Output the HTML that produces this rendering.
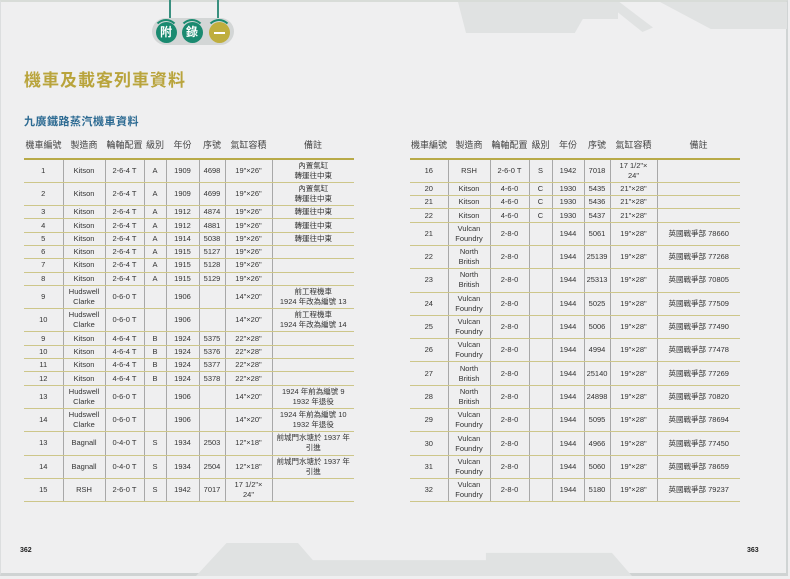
<!DOCTYPE html>
<html><head><meta charset="utf-8"><style>
*{margin:0;padding:0;box-sizing:border-box}
body{width:790px;height:579px;background:#efeff0;position:relative;overflow:hidden;font-family:"Liberation Sans","Noto Sans CJK TC",sans-serif;color:#333}
.frame{position:absolute;left:0;top:0;width:788px;height:576px;border-top:2px solid #d8dcd8;border-right:2px solid #d0d4d4;border-bottom:3px solid #cfd3d3;border-left:1px solid #dcdedf}
.sh{position:absolute;background:#e0e2e2}
table{position:absolute;border-collapse:collapse;table-layout:fixed;font-size:7.5px;line-height:10px}
td{text-align:center;vertical-align:middle;border-bottom:1px solid #cdc68a;border-left:1px solid #a8a8a8;padding:0;white-space:nowrap}
td:first-child{border-left:none}
tr.h td{border:none;border-bottom:2px solid #b8aa48;font-size:9px;color:#444;height:24px;vertical-align:middle;padding-bottom:3px}
tr.d td{height:23.3px}
tr.s td{height:13.3px}
.ring{position:absolute;width:26px;height:26px;border-radius:50%;border:2px solid transparent;border-top-color:#1a8a70}
.c{position:absolute;width:21px;height:21px;border-radius:50%;background:#1a8a70;color:#fff;font-size:12px;font-weight:bold;text-align:center;line-height:21px}
</style></head><body>
<div class="frame"></div>
<div class="sh" style="left:458px;top:2px;width:160px;height:31px;clip-path:polygon(0 0,100% 0,100% 55%,78% 55%,73% 100%,5% 100%,0 0)"></div>
<div class="sh" style="left:605px;top:2px;width:48px;height:30px;clip-path:polygon(0 0,30% 0,100% 85%,78% 100%)"></div>
<div class="sh" style="left:660px;top:2px;width:127px;height:27px;clip-path:polygon(0 0,100% 0,100% 100%,40% 100%)"></div>
<div class="sh" style="left:196px;top:543px;width:436px;height:33px;clip-path:polygon(7% 0,23.4% 0,26.8% 52%,66.5% 52%,66.5% 30%,95.4% 30%,100% 100%,0 100%)"></div>

<div style="position:absolute;left:169px;top:0;width:2px;height:19px;background:#3a9080"></div>
<div style="position:absolute;left:217px;top:0;width:2px;height:19px;background:#3a9080"></div>
<div style="position:absolute;left:152px;top:18px;width:82px;height:27px;border-radius:14px;background:#d3d6d6"></div>
<div class="ring" style="left:153px;top:19px"></div>
<div class="ring" style="left:179px;top:19px"></div>
<div class="ring" style="left:206px;top:19px"></div>
<div class="c" style="left:155.5px;top:22px">附</div>
<div class="c" style="left:181.5px;top:22px">錄</div>
<div class="c" style="left:208.5px;top:22px;background:#bfae3e"><div style="position:absolute;left:5px;top:9.5px;width:11px;height:2.5px;background:#fff"></div></div>

<div style="position:absolute;left:24px;top:66px;font-size:17px;font-weight:bold;color:#b9a43c;letter-spacing:1px">機車及載客列車資料</div>
<div style="position:absolute;left:24px;top:113px;font-size:11px;font-weight:bold;color:#2c6a92;letter-spacing:.5px">九廣鐵路蒸汽機車資料</div>

<table style="left:24px;top:135px;width:330px">
<colgroup><col style="width:39px"><col style="width:42px"><col style="width:39px"><col style="width:22px"><col style="width:33px"><col style="width:26px"><col style="width:47px"><col style="width:82px"></colgroup>
<tr class="h"><td>機車編號</td><td>製造商</td><td>輪軸配置</td><td>級別</td><td>年份</td><td>序號</td><td>氣缸容積</td><td>備註</td></tr>
<tr class="d"><td>1</td><td>Kitson</td><td>2-6-4 T</td><td>A</td><td>1909</td><td>4698</td><td>19"×26"</td><td>內置氣缸<br>轉運往中東</td></tr>
<tr class="d"><td>2</td><td>Kitson</td><td>2-6-4 T</td><td>A</td><td>1909</td><td>4699</td><td>19"×26"</td><td>內置氣缸<br>轉運往中東</td></tr>
<tr class="s"><td>3</td><td>Kitson</td><td>2-6-4 T</td><td>A</td><td>1912</td><td>4874</td><td>19"×26"</td><td>轉運往中東</td></tr>
<tr class="s"><td>4</td><td>Kitson</td><td>2-6-4 T</td><td>A</td><td>1912</td><td>4881</td><td>19"×26"</td><td>轉運往中東</td></tr>
<tr class="s"><td>5</td><td>Kitson</td><td>2-6-4 T</td><td>A</td><td>1914</td><td>5038</td><td>19"×26"</td><td>轉運往中東</td></tr>
<tr class="s"><td>6</td><td>Kitson</td><td>2-6-4 T</td><td>A</td><td>1915</td><td>5127</td><td>19"×26"</td><td></td></tr>
<tr class="s"><td>7</td><td>Kitson</td><td>2-6-4 T</td><td>A</td><td>1915</td><td>5128</td><td>19"×26"</td><td></td></tr>
<tr class="s"><td>8</td><td>Kitson</td><td>2-6-4 T</td><td>A</td><td>1915</td><td>5129</td><td>19"×26"</td><td></td></tr>
<tr class="d"><td>9</td><td>Hudswell<br>Clarke</td><td>0-6-0 T</td><td></td><td>1906</td><td></td><td>14"×20"</td><td>前工程機車<br>1924 年改為編號 13</td></tr>
<tr class="d"><td>10</td><td>Hudswell<br>Clarke</td><td>0-6-0 T</td><td></td><td>1906</td><td></td><td>14"×20"</td><td>前工程機車<br>1924 年改為編號 14</td></tr>
<tr class="s"><td>9</td><td>Kitson</td><td>4-6-4 T</td><td>B</td><td>1924</td><td>5375</td><td>22"×28"</td><td></td></tr>
<tr class="s"><td>10</td><td>Kitson</td><td>4-6-4 T</td><td>B</td><td>1924</td><td>5376</td><td>22"×28"</td><td></td></tr>
<tr class="s"><td>11</td><td>Kitson</td><td>4-6-4 T</td><td>B</td><td>1924</td><td>5377</td><td>22"×28"</td><td></td></tr>
<tr class="s"><td>12</td><td>Kitson</td><td>4-6-4 T</td><td>B</td><td>1924</td><td>5378</td><td>22"×28"</td><td></td></tr>
<tr class="d"><td>13</td><td>Hudswell<br>Clarke</td><td>0-6-0 T</td><td></td><td>1906</td><td></td><td>14"×20"</td><td>1924 年前為編號 9<br>1932 年退役</td></tr>
<tr class="d"><td>14</td><td>Hudswell<br>Clarke</td><td>0-6-0 T</td><td></td><td>1906</td><td></td><td>14"×20"</td><td>1924 年前為編號 10<br>1932 年退役</td></tr>
<tr class="d"><td>13</td><td>Bagnall</td><td>0-4-0 T</td><td>S</td><td>1934</td><td>2503</td><td>12"×18"</td><td>前城門水塘於 1937 年<br>引進</td></tr>
<tr class="d"><td>14</td><td>Bagnall</td><td>0-4-0 T</td><td>S</td><td>1934</td><td>2504</td><td>12"×18"</td><td>前城門水塘於 1937 年<br>引進</td></tr>
<tr class="d"><td>15</td><td>RSH</td><td>2-6-0 T</td><td>S</td><td>1942</td><td>7017</td><td>17 1/2"×<br>24"</td><td></td></tr>
</table>

<table style="left:410px;top:135px;width:330px">
<colgroup><col style="width:38px"><col style="width:42px"><col style="width:39px"><col style="width:23px"><col style="width:32px"><col style="width:26px"><col style="width:47px"><col style="width:83px"></colgroup>
<tr class="h"><td>機車編號</td><td>製造商</td><td>輪軸配置</td><td>級別</td><td>年份</td><td>序號</td><td>氣缸容積</td><td>備註</td></tr>
<tr class="d"><td>16</td><td>RSH</td><td>2-6-0 T</td><td>S</td><td>1942</td><td>7018</td><td>17 1/2"×<br>24"</td><td></td></tr>
<tr class="s"><td>20</td><td>Kitson</td><td>4-6-0</td><td>C</td><td>1930</td><td>5435</td><td>21"×28"</td><td></td></tr>
<tr class="s"><td>21</td><td>Kitson</td><td>4-6-0</td><td>C</td><td>1930</td><td>5436</td><td>21"×28"</td><td></td></tr>
<tr class="s"><td>22</td><td>Kitson</td><td>4-6-0</td><td>C</td><td>1930</td><td>5437</td><td>21"×28"</td><td></td></tr>
<tr class="d"><td>21</td><td>Vulcan<br>Foundry</td><td>2-8-0</td><td></td><td>1944</td><td>5061</td><td>19"×28"</td><td>英國戰爭部 78660</td></tr>
<tr class="d"><td>22</td><td>North<br>British</td><td>2-8-0</td><td></td><td>1944</td><td>25139</td><td>19"×28"</td><td>英國戰爭部 77268</td></tr>
<tr class="d"><td>23</td><td>North<br>British</td><td>2-8-0</td><td></td><td>1944</td><td>25313</td><td>19"×28"</td><td>英國戰爭部 70805</td></tr>
<tr class="d"><td>24</td><td>Vulcan<br>Foundry</td><td>2-8-0</td><td></td><td>1944</td><td>5025</td><td>19"×28"</td><td>英國戰爭部 77509</td></tr>
<tr class="d"><td>25</td><td>Vulcan<br>Foundry</td><td>2-8-0</td><td></td><td>1944</td><td>5006</td><td>19"×28"</td><td>英國戰爭部 77490</td></tr>
<tr class="d"><td>26</td><td>Vulcan<br>Foundry</td><td>2-8-0</td><td></td><td>1944</td><td>4994</td><td>19"×28"</td><td>英國戰爭部 77478</td></tr>
<tr class="d"><td>27</td><td>North<br>British</td><td>2-8-0</td><td></td><td>1944</td><td>25140</td><td>19"×28"</td><td>英國戰爭部 77269</td></tr>
<tr class="d"><td>28</td><td>North<br>British</td><td>2-8-0</td><td></td><td>1944</td><td>24898</td><td>19"×28"</td><td>英國戰爭部 70820</td></tr>
<tr class="d"><td>29</td><td>Vulcan<br>Foundry</td><td>2-8-0</td><td></td><td>1944</td><td>5095</td><td>19"×28"</td><td>英國戰爭部 78694</td></tr>
<tr class="d"><td>30</td><td>Vulcan<br>Foundry</td><td>2-8-0</td><td></td><td>1944</td><td>4966</td><td>19"×28"</td><td>英國戰爭部 77450</td></tr>
<tr class="d"><td>31</td><td>Vulcan<br>Foundry</td><td>2-8-0</td><td></td><td>1944</td><td>5060</td><td>19"×28"</td><td>英國戰爭部 78659</td></tr>
<tr class="d"><td>32</td><td>Vulcan<br>Foundry</td><td>2-8-0</td><td></td><td>1944</td><td>5180</td><td>19"×28"</td><td>英國戰爭部 79237</td></tr>
</table>

<div style="position:absolute;left:20px;top:547px;font-size:7px;font-weight:bold;color:#222">362</div>
<div style="position:absolute;left:747px;top:547px;font-size:7px;font-weight:bold;color:#222">363</div>
</body></html>
